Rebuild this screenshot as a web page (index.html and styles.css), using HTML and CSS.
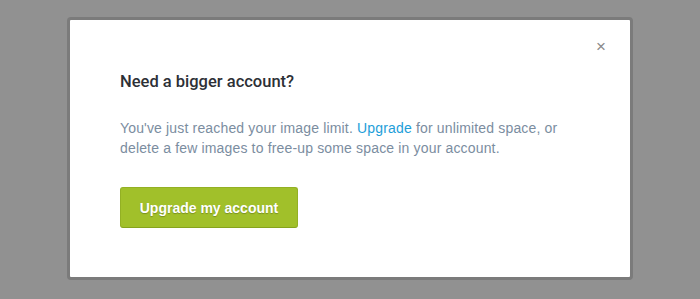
FILE: index.html
```html
<!DOCTYPE html>
<html>
<head>
<meta charset="utf-8">
<link rel="stylesheet" href="styles.css">
</head>
<body>
<div class="overlay">
  <div class="modal">
    <button class="close" aria-label="Close">&times;</button>
    <h2 class="title">Need a bigger account?</h2>
    <p class="text">You've just reached your image limit. <a href="#" class="link">Upgrade</a> for unlimited space, or delete a few images to free-up some space in your account.</p>
    <button class="btn">Upgrade my account</button>
  </div>
</div>
</body>
</html>
```

FILE: styles.css
```css
html, body {
  margin: 0;
  padding: 0;
  background: #919191;
  font-family: "Liberation Sans", Arial, sans-serif;
}
.overlay {
  width: 700px;
  height: 299px;
  padding-top: 17px;
  padding-left: 67px;
  box-sizing: border-box;
}
.modal {
  position: relative;
  box-sizing: border-box;
  width: 566px;
  height: 263px;
  background: #fff;
  border: 3px solid #7b7b7b;
  border-radius: 4px;
  padding: 52px 50px 0 50px;
}
.close {
  position: absolute;
  top: 18px;
  right: 24px;
  border: 0;
  background: none;
  padding: 0;
  font-family: "Liberation Sans", Arial, sans-serif;
  font-size: 17px;
  line-height: 17px;
  color: #8a8a8a;
}
.title {
  margin: 0;
  font-family: Roboto, "Liberation Sans", Arial, sans-serif;
  font-size: 16.5px;
  font-weight: 500;
  color: #2d3036;
  line-height: 20px;
}
.text {
  margin: 26px 0 0 0;
  font-size: 14px;
  letter-spacing: 0.16px;
  line-height: 20px;
  color: #7b8d9f;
  width: 455px;
}
.link {
  color: #1d9ed9;
  text-decoration: none;
}
.btn {
  display: block;
  margin-top: 29px;
  width: 178px;
  height: 41px;
  background: #a1c02a;
  border: 1px solid #93b024;
  border-bottom-color: #86a31d;
  border-radius: 3px;
  color: #fff;
  font-family: "Liberation Sans", Arial, sans-serif;
  font-size: 14px;
  font-weight: bold;
  text-shadow: 0 1px 1px rgba(0,0,0,0.25);
  padding: 0;
}
```
